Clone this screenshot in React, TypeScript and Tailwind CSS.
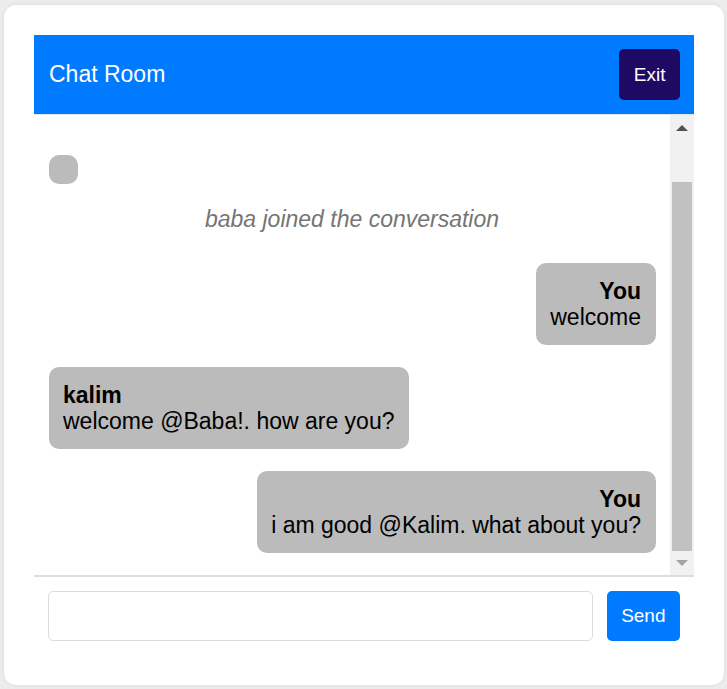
type Msg =
  | { kind: 'system'; text: string }
  | { kind: 'chat'; user: string; text: string; mine?: boolean };

const messages: Msg[] = [
  { kind: 'chat', user: '', text: '' },
  { kind: 'system', text: 'baba joined the conversation' },
  { kind: 'chat', user: 'You', text: 'welcome', mine: true },
  { kind: 'chat', user: 'kalim', text: 'welcome @Baba!. how are you?' },
  { kind: 'chat', user: 'You', text: 'i am good @Kalim. what about you?', mine: true },
];

function Bubble({ msg }: { msg: Extract<Msg, { kind: 'chat' }> }) {
  return (
    <div
      className={`mb-[22px] rounded-[10px] bg-[#bbbbbb] p-[14.5px] leading-[26.5px] text-black ${
        msg.mine ? 'self-end text-right' : 'self-start text-left'
      }`}
    >
      {msg.user && <div className="font-bold">{msg.user}</div>}
      {msg.text && <div>{msg.text}</div>}
    </div>
  );
}

// classic scrollbar look, scrolled to the bottom
function ScrollBar() {
  return (
    <div className="flex w-[24px] shrink-0 flex-col bg-[#f1f1f1]">
      <div className="flex h-[24px] items-center justify-center pt-[2px]">
        <svg width="12" height="6" viewBox="0 0 12 6">
          <polygon points="6,0 12,6 0,6" fill="#505050" />
        </svg>
      </div>
      <div className="flex flex-1 flex-col justify-end px-[2px]">
        <div className="h-[369px] bg-[#c1c1c1]" />
      </div>
      <div className="flex h-[24px] items-center justify-center pb-[1px]">
        <svg width="12" height="6" viewBox="0 0 12 6">
          <polygon points="0,0 12,0 6,6" fill="#a3a3a3" />
        </svg>
      </div>
    </div>
  );
}

export default function App() {
  return (
    <div className="min-h-[689px] bg-[#ececec] pl-[4px] pt-[5px] font-['Liberation_Sans',Arial,sans-serif] text-[23px]">
      <div className="w-[720px] rounded-[12px] bg-white p-[30px] pb-[29px] shadow-[0_0_4px_rgba(0,0,0,0.08)]">
        <header className="flex h-[80px] items-center justify-between border-b border-[#e4e4e4] bg-[#007bff] pl-[15px] pr-[14px]">
          <h1 className="text-[23px] font-normal text-white">Chat Room</h1>
          <button className="rounded-[5px] bg-[#1f0a63] px-[14.5px] py-[14.5px] text-[19px] leading-[22px] text-white">
            Exit
          </button>
        </header>

        <div className="flex h-[460px]">
          <div className="flex flex-1 flex-col overflow-hidden px-[14.5px] pt-[40px]">
            {messages.map((m, i) =>
              m.kind === 'system' ? (
                <p key={i} className="mb-[30px] text-center italic leading-[27px] text-[#757575]">
                  {m.text}
                </p>
              ) : (
                <Bubble key={i} msg={m} />
              )
            )}
          </div>
          <ScrollBar />
        </div>

        <form
          className="flex gap-[14px] border-t-2 border-[#dddddd] px-[14px] pt-[14px] pb-[15px]"
          onSubmit={(e) => e.preventDefault()}
        >
          <input
            type="text"
            className="h-[50px] flex-1 rounded-[5px] border border-[#dcdcdc] px-3 text-[19px] outline-none"
          />
          <button
            type="submit"
            className="h-[50px] rounded-[5px] bg-[#007bff] px-[14.5px] text-[19px] text-white"
          >
            Send
          </button>
        </form>
      </div>
    </div>
  );
}
